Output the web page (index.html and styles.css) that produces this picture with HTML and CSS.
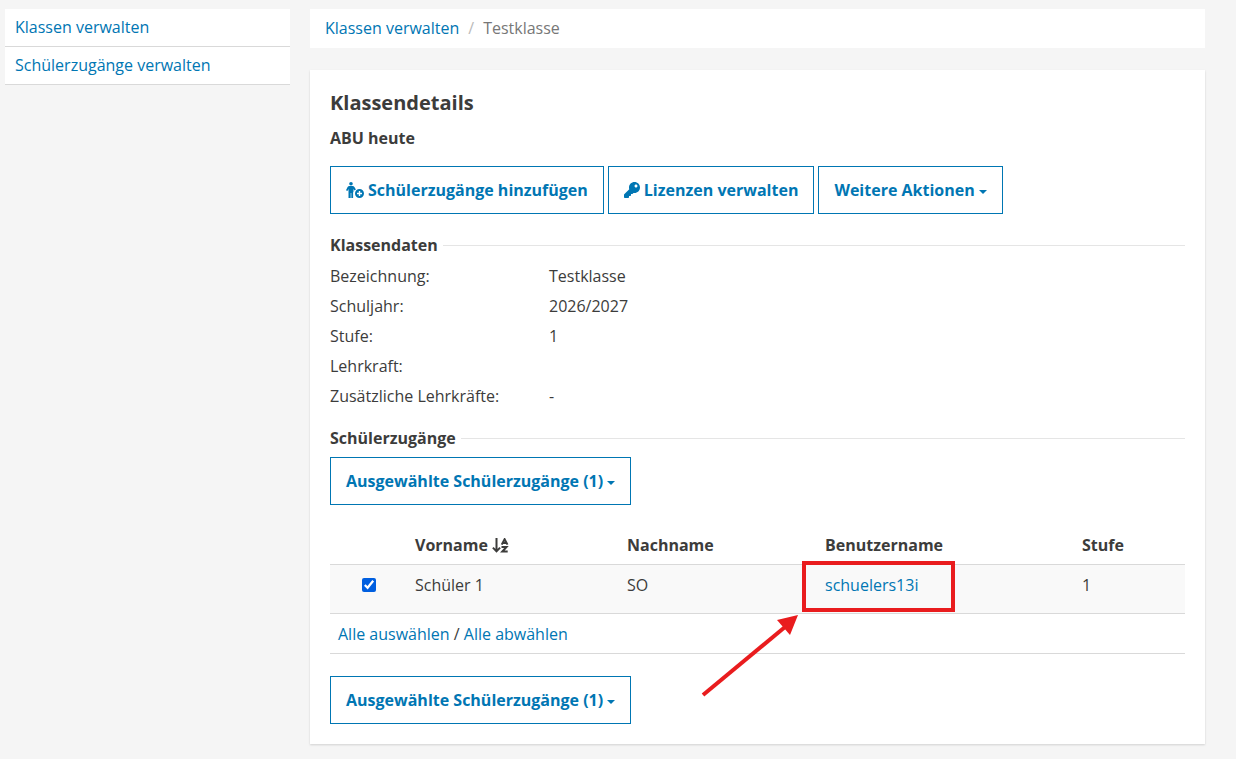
FILE: index.html
```html
<!DOCTYPE html>
<html lang="de">
<head>
    <meta charset="UTF-8">
    <meta name="viewport" content="width=device-width, initial-scale=1.0">
    <title>Klassendetails</title>
    <link rel="stylesheet" href="styles.css">
</head>
<body>
    <div class="wrap">
        <nav class="sidebar">
            <a href="#">Klassen verwalten</a>
            <a href="#">Schülerzugänge verwalten</a>
        </nav>
        <main class="content">
            <nav class="breadcrumb">
                <a href="#">Klassen verwalten</a>
                <span class="separator">/</span>
                <span class="current">Testklasse</span>
            </nav>
            <div class="card">
                <h1>Klassendetails</h1>
                <h2>ABU heute</h2>
                <div class="buttons">
                    <button type="button" class="btn">
                        <svg class="icon-add" viewBox="0 0 18 16" aria-hidden="true">
                            <circle cx="5" cy="1.8" r="1.8"/>
                            <path d="M3.4 4h3.2c.8 0 1.4.3 1.8 1l1.5 2.4-1.4 1-1-1.4v2.5c-.5.8-.6 1.6-.4 2.5V16H5.3v-5h-.6v5H2.5V7L1.4 9.1 0 8.2 1.6 5c.4-.7 1-1 1.8-1z"/>
                            <path fill-rule="evenodd" d="M13.5 7a4.5 4.5 0 1 1 0 9 4.5 4.5 0 0 1 0-9zm-.7 2v1.8H11v1.4h1.8V14h1.4v-1.8H16v-1.4h-1.8V9z"/>
                        </svg>
                        Schülerzugänge hinzufügen
                    </button>
                    <button type="button" class="btn">
                        <svg class="icon-key" viewBox="0 0 512 512" aria-hidden="true">
                            <path d="M512 176.001C512 273.203 433.202 352 336 352c-11.22 0-22.19-1.062-32.827-3.069l-24.012 27.014A23.999 23.999 0 0 1 261.223 384H224v40c0 13.255-10.745 24-24 24h-40v40c0 13.255-10.745 24-24 24H24c-13.255 0-24-10.745-24-24v-78.059c0-6.365 2.529-12.47 7.029-16.971l161.802-161.802C163.108 213.814 160 195.271 160 176 160 78.798 238.797.001 335.999 0 433.488-.001 512 78.511 512 176.001zM336 128c0 26.51 21.49 48 48 48s48-21.49 48-48-21.49-48-48-48-48 21.49-48 48z"/>
                        </svg>
                        Lizenzen verwalten
                    </button>
                    <button type="button" class="btn">Weitere Aktionen<span class="caret"></span></button>
                </div>

                <h3>Klassendaten</h3>
                <dl class="details">
                    <dt>Bezeichnung:</dt>
                    <dd>Testklasse</dd>
                    <dt>Schuljahr:</dt>
                    <dd>2026/2027</dd>
                    <dt>Stufe:</dt>
                    <dd>1</dd>
                    <dt>Lehrkraft:</dt>
                    <dd></dd>
                    <dt>Zusätzliche Lehrkräfte:</dt>
                    <dd>-</dd>
                </dl>

                <h3>Schülerzugänge</h3>
                <button type="button" class="btn">Ausgewählte Schülerzugänge (1)<span class="caret"></span></button>
                <table class="students">
                    <colgroup>
                        <col class="col-check">
                        <col class="col-first">
                        <col class="col-last">
                        <col class="col-user">
                        <col class="col-level">
                    </colgroup>
                    <thead>
                        <tr>
                            <th></th>
                            <th>Vorname
                                <svg class="icon-sort" viewBox="0 0 17 15" aria-hidden="true">
                                    <path d="M4.5 0v13M.9 9.6l3.6 3.8 3.6-3.8" fill="none" stroke="currentColor" stroke-width="2"/>
                                    <path d="M9.7 6.6l2.9-5.4 2.9 5.4M10.8 5h3.6" fill="none" stroke="currentColor" stroke-width="2"/>
                                    <path d="M9.5 9h5l-4.2 4.6h5.4" fill="none" stroke="currentColor" stroke-width="2"/>
                                </svg>
                            </th>
                            <th>Nachname</th>
                            <th>Benutzername</th>
                            <th>Stufe</th>
                        </tr>
                    </thead>
                    <tbody>
                        <tr>
                            <td class="check"><input type="checkbox" id="student1" aria-label="Schüler 1 auswählen" checked></td>
                            <td><label for="student1">Schüler 1</label></td>
                            <td>SO</td>
                            <td class="user">
                                <a href="#">schuelers13i</a>
                                <span class="marker"></span>
                                <svg class="arrow" viewBox="0 0 100 84" aria-hidden="true">
                                    <path d="M2 81L84 13" stroke="currentColor" stroke-width="4"/>
                                    <path d="M97 1L89 21L76 6z" fill="currentColor"/>
                                </svg>
                            </td>
                            <td>1</td>
                        </tr>
                    </tbody>
                    <tfoot>
                        <tr>
                            <td colspan="5"><a href="#">Alle auswählen</a> / <a href="#">Alle abwählen</a></td>
                        </tr>
                    </tfoot>
                </table>
                <button type="button" class="btn">Ausgewählte Schülerzugänge (1)<span class="caret"></span></button>
            </div>
        </main>
    </div>
</body>
</html>
```
FILE: styles.css
```css
*{box-sizing: border-box;}
body{
    margin: 0;
    background: #f5f5f5;
    color: #3c3c3b;
    font: 16px/24px "Open Sans", sans-serif;
}
a{
    color: #0076b3;
    text-decoration: none;
}
a:hover{text-decoration: underline;}
.wrap{
    display: flex;
    align-items: flex-start;
    gap: 20px;
    padding: 9px 31px 15px 5px;
}
/* Navigation links */
.sidebar{
    flex: 0 0 285px;
    background: #fff;
}
.sidebar a{
    display: block;
    padding: 6px 10px 7px;
    border-bottom: 1px solid #d9d9d9;
}
.content{
    flex: 1;
    min-width: 0;
}
.breadcrumb{
    display: flex;
    gap: 9px;
    margin-bottom: 22px;
    padding: 7px 15px 8px;
    background: #fff;
}
.separator{color: #bbb;}
.current{color: #777;}
.card{
    padding: 20px;
    background: #fff;
    box-shadow: 0 1px 2px rgba(0, 0, 0, .15);
}
h1, h2, h3{margin: 0;}
h1{
    margin-bottom: 10px;
    font-size: 20px;
    line-height: 26px;
}
h2{
    margin-bottom: 16px;
    font-size: 16px;
}
/* Zwischentitel mit Linie */
h3{
    display: flex;
    align-items: center;
    gap: 5px;
    font-size: 16px;
}
h3::after{
    content: "";
    flex: 1;
    border-top: 1px solid #e5e5e5;
}
/* Buttons */
.buttons{
    display: flex;
    flex-wrap: wrap;
    gap: 4px;
    margin-bottom: 19px;
}
.btn{
    display: inline-flex;
    align-items: center;
    gap: 4px;
    height: 48px;
    padding: 0 15px;
    border: 1px solid #0076b3;
    background: #fff;
    color: #0076b3;
    font: inherit;
    font-weight: 700;
    vertical-align: top;
    cursor: pointer;
}
.btn svg{fill: currentColor;}
.icon-add{
    width: 18px;
    height: 16px;
}
.icon-key{
    width: 16px;
    height: 16px;
}
.caret{
    margin-top: 4px;
    border-top: 4px solid;
    border-left: 4px solid transparent;
    border-right: 4px solid transparent;
}
/* Klassendaten */
.details{
    display: grid;
    grid-template-columns: 219px 1fr;
    margin: 4px 0 15px;
    line-height: 30px;
}
.details dd{margin: 0;}
.details + h3{margin-bottom: 7px;}
/* Tabelle */
.students{
    width: 100%;
    margin: 20px 0 22px;
    border-collapse: separate;
    border-spacing: 0;
    table-layout: fixed;
}
.students th, .students td{
    padding: 8px 8px 7px;
    border-bottom: 1px solid #d9d9d9;
    text-align: left;
    vertical-align: top;
}
.students tbody td{
    height: 49px;
    background: #f9f9f9;
}
.col-check{width: 77px;}
.col-first{width: 212px;}
.col-last{width: 198px;}
.col-user{width: 257px;}
.students .check{text-align: center;}
.check input{
    width: 14px;
    height: 14px;
    margin: 5px 0;
    accent-color: #005fe0;
    vertical-align: top;
}
.icon-sort{
    width: 17px;
    height: 15px;
    vertical-align: -2px;
}
/* Markierung und Pfeil liegen über der Tabelle */
.user{position: relative;}
.marker{
    position: absolute;
    top: -4px;
    left: -15px;
    width: 153px;
    height: 51px;
    border: 4px solid #e91c1e;
}
.arrow{
    position: absolute;
    top: 49px;
    left: -116px;
    width: 100px;
    height: 84px;
    color: #e91c1e;
}
```
